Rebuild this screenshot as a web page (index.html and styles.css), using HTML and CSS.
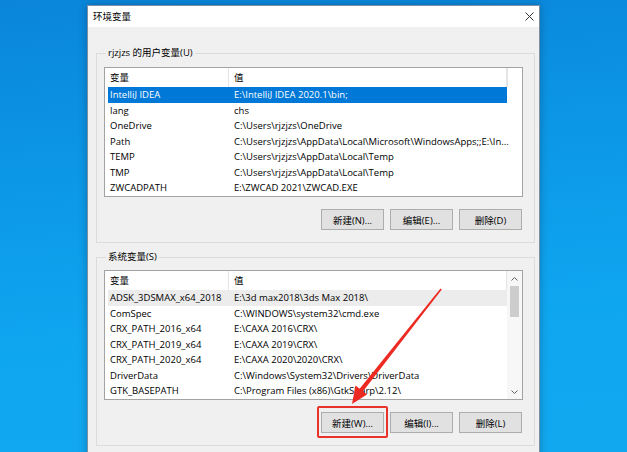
FILE: index.html
```html
<!DOCTYPE html>
<html lang="zh-CN">
<head>
  <meta charset="UTF-8">
  <meta name="viewport" content="width=device-width, initial-scale=1.0">
  <title>环境变量</title>
  <link rel="stylesheet" href="styles.css">
</head>
<body>
  <div class="window">
    <div class="titlebar">
      <span class="title">环境变量</span>
      <svg class="close" width="9" height="9" viewBox="0 0 9 9">
        <path d="M0.5 0.5 L8.5 8.5 M8.5 0.5 L0.5 8.5" stroke="#333" stroke-width="1" fill="none"/>
      </svg>
    </div>

    <div class="dialog-body">
      <fieldset class="group">
        <legend>rjzjzs 的用户变量(U)</legend>
        <div class="list">
          <div class="list-main">
            <div class="list-head">
              <div class="head-cell">变量</div>
              <div class="head-cell">值</div>
            </div>
            <div class="row selected"><span>IntelliJ IDEA</span><span>E:\IntelliJ IDEA 2020.1\bin;</span></div>
            <div class="row"><span>lang</span><span>chs</span></div>
            <div class="row"><span>OneDrive</span><span>C:\Users\rjzjzs\OneDrive</span></div>
            <div class="row"><span>Path</span><span>C:\Users\rjzjzs\AppData\Local\Microsoft\WindowsApps;;E:\In...</span></div>
            <div class="row"><span>TEMP</span><span>C:\Users\rjzjzs\AppData\Local\Temp</span></div>
            <div class="row"><span>TMP</span><span>C:\Users\rjzjzs\AppData\Local\Temp</span></div>
            <div class="row"><span>ZWCADPATH</span><span>E:\ZWCAD 2021\ZWCAD.EXE</span></div>
          </div>
          <div class="list-filler"></div>
        </div>
        <div class="buttons">
          <button>新建(N)...</button>
          <button>编辑(E)...</button>
          <button>删除(D)</button>
        </div>
      </fieldset>

      <fieldset class="group group-system">
        <legend>系统变量(S)</legend>
        <div class="list">
          <div class="list-main">
            <div class="list-head">
              <div class="head-cell">变量</div>
              <div class="head-cell">值</div>
            </div>
            <div class="row hover"><span>ADSK_3DSMAX_x64_2018</span><span>E:\3d max2018\3ds Max 2018\</span></div>
            <div class="row"><span>ComSpec</span><span>C:\WINDOWS\system32\cmd.exe</span></div>
            <div class="row"><span>CRX_PATH_2016_x64</span><span>E:\CAXA 2016\CRX\</span></div>
            <div class="row"><span>CRX_PATH_2019_x64</span><span>E:\CAXA 2019\CRX\</span></div>
            <div class="row"><span>CRX_PATH_2020_x64</span><span>E:\CAXA 2020\2020\CRX\</span></div>
            <div class="row"><span>DriverData</span><span>C:\Windows\System32\Drivers\DriverData</span></div>
            <div class="row"><span>GTK_BASEPATH</span><span>C:\Program Files (x86)\GtkSharp\2.12\</span></div>
          </div>
          <div class="scrollbar">
            <div class="scroll-btn">
              <svg width="7" height="4" viewBox="0 0 7 4"><path d="M0.5 3.5 L3.5 0.5 L6.5 3.5" stroke="#606060" fill="none"/></svg>
            </div>
            <div class="scroll-track"><div class="scroll-thumb"></div></div>
            <div class="scroll-btn">
              <svg width="7" height="4" viewBox="0 0 7 4"><path d="M0.5 0.5 L3.5 3.5 L6.5 0.5" stroke="#606060" fill="none"/></svg>
            </div>
          </div>
        </div>
        <div class="buttons">
          <button>新建(W)...</button>
          <button>编辑(I)...</button>
          <button>删除(L)</button>
        </div>
      </fieldset>
    </div>
  </div>

  <!-- annotation drawn over the screenshot -->
  <div class="mark-box"></div>
  <svg class="mark-arrow" width="627" height="452" viewBox="0 0 627 452">
    <polygon points="440.5,288.5 441.8,289.5 362.5,392 359,389.5" fill="#ec2a22"/>
    <polygon points="352,404 355.5,385.5 367,394.5" fill="#ec2a22"/>
  </svg>
</body>
</html>
```

FILE: styles.css
```css
* {
  box-sizing: border-box;
}

body {
  margin: 0;
  width: 627px;
  height: 452px;
  overflow: hidden;
  position: relative;
  font-family: "Open Sans", "Noto Sans CJK SC", sans-serif;
  font-size: 9.5px;
  color: #000;
  background: linear-gradient(175deg, #0a85da 0%, #0c97e6 35%, #0fa6f0 70%, #12a8f0 100%);
}

.window {
  margin: 5px 0 0 87px;
  width: 453px;
  height: 460px;
  background: #f0f0f0;
  border: 1px solid #7d8fa3;
  box-shadow: 0 0 8px rgba(0, 0, 0, 0.25);
}

.titlebar {
  height: 21px;
  background: #fff;
  display: flex;
  align-items: center;
  justify-content: space-between;
  padding: 0 5px 0 5px;
}

.title {
  line-height: 16px;
}

.dialog-body {
  padding: 18px 0 0 8px;
}

.group {
  width: 437px;
  margin: 0;
  padding: 6px 11px 12px 7px;
  border: 1px solid #dcdcdc;
}

.group-system {
  margin-top: 6px;
  padding-top: 5px;
}

.group legend {
  padding: 0 2px;
  margin-left: 2px;
  line-height: 16px;
}

.list {
  display: flex;
  width: 419px;
  height: 130px;
  background: #fff;
  border: 1px solid #a3a3a3;
}

.list-main {
  width: 402px;
}

.list-filler {
  width: 15px;
  height: 19px;
  border-left: 1px solid #e5e5e5;
}

.list-head {
  display: grid;
  grid-template-columns: 124px 278px;
  height: 19px;
}

.head-cell {
  padding-left: 5px;
  line-height: 19px;
  border-right: 1px solid #e5e5e5;
}

.row {
  display: grid;
  grid-template-columns: 121px 278px;
  height: 15.5px;
  line-height: 15.5px;
  margin-left: 3px;
  white-space: nowrap;
}

.row span {
  padding-left: 2px;
}

.row span + span {
  padding-left: 5px;
}

.row.selected {
  background: #0078d7;
  color: #fff;
}

.row.hover {
  background: #ececec;
}

.scrollbar {
  width: 15px;
  display: flex;
  flex-direction: column;
  background: #f7f7f7;
}

.scroll-btn {
  height: 15px;
  display: flex;
  align-items: center;
  justify-content: center;
}

.scroll-track {
  flex: 1;
  padding: 0 3px;
}

.scroll-thumb {
  height: 31px;
  background: #cdcdcd;
}

.buttons {
  display: flex;
  justify-content: flex-end;
  gap: 6px;
  margin-top: 12px;
  padding-right: 1px;
}

.buttons button {
  width: 63px;
  height: 21px;
  padding: 0;
  font: inherit;
  color: #000;
  background: #e1e1e1;
  border: 1px solid #adadad;
}

.mark-box {
  position: absolute;
  left: 317px;
  top: 406px;
  width: 71px;
  height: 32px;
  border: 2px solid #e8322a;
  border-radius: 2px;
}

.mark-arrow {
  position: absolute;
  left: 0;
  top: 0;
}
```
